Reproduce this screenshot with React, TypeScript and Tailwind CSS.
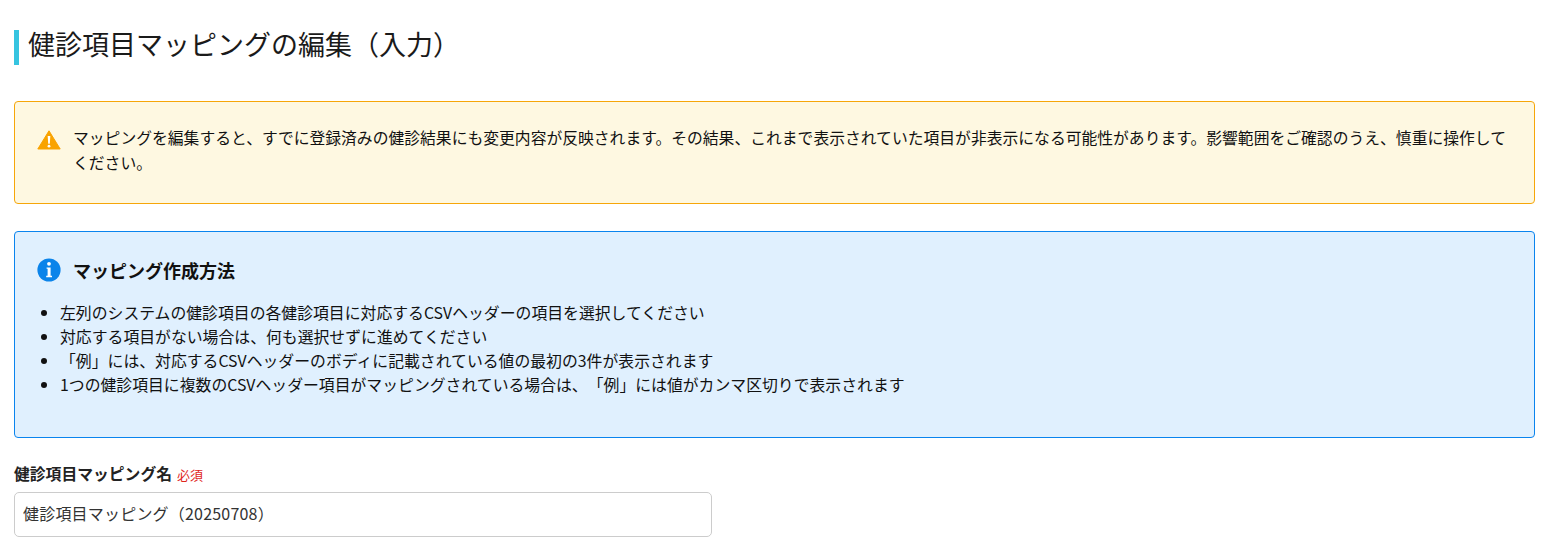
import React from "react";

const FONT = "font-['Noto_Sans_CJK_JP','Noto_Sans',sans-serif]";

const WarningIcon = () => (
  <svg width="24" height="20" viewBox="0 0 24 20" className="shrink-0">
    <path d="M12 0.8 L23.2 19 H0.8 Z" fill="#f9a300" stroke="#f9a300" strokeWidth="1" strokeLinejoin="round" />
    <path d="M10.7 6 H13.3 L12.8 13.8 H11.2 Z" fill="#fff" />
    <circle cx="12" cy="16.2" r="1.4" fill="#fff" />
  </svg>
);

const InfoIcon = () => (
  <svg width="24" height="24" viewBox="0 0 24 24" className="shrink-0">
    <circle cx="12" cy="12" r="11.6" fill="#0b84ea" />
    <circle cx="12" cy="5.8" r="1.9" fill="#fff" />
    <path d="M9.6 9.4 H13.6 V17.8 H15 V19.2 H9.2 V17.8 H10.6 V10.8 H9.6 Z" fill="#fff" />
  </svg>
);

const items = [
  "左列のシステムの健診項目の各健診項目に対応するCSVヘッダーの項目を選択してください",
  "対応する項目がない場合は、何も選択せずに進めてください",
  "「例」には、対応するCSVヘッダーのボディに記載されている値の最初の3件が表示されます",
  "1つの健診項目に複数のCSVヘッダー項目がマッピングされている場合は、「例」には値がカンマ区切りで表示されます",
];

export default function App() {
  return (
    <div className={`${FONT} [text-spacing-trim:space-all] bg-white min-h-[542px] overflow-hidden pl-[14px] pr-[13px] pt-[30px] text-[#111]`}>
      <h1 className="border-l-[5px] border-[#36c4e0] pl-[9px] h-[35px] text-[27px] leading-[28px] font-normal text-[#1a1a1a]">
        健診項目マッピングの編集（入力）
      </h1>

      <div className="mt-[36px] h-[103px] rounded border border-[#f6a609] bg-[#fef8e1] pl-[22px] pr-[24px] pt-[24px] flex gap-[12px]">
        <div className="pt-[4px]">
          <WarningIcon />
        </div>
        <p className="text-[15.8px] leading-[24.5px]">
          マッピングを編集すると、すでに登録済みの健診結果にも変更内容が反映されます。その結果、これまで表示されていた項目が非表示になる可能性があります。影響範囲をご確認のうえ、慎重に操作してください。
        </p>
      </div>

      <div className="mt-[27px] h-[207px] rounded border border-[#0a84ee] bg-[#e0f0fe] pl-[22px] pr-[24px] pt-[26px]">
        <div className="flex items-center gap-[12px] h-[24px]">
          <InfoIcon />
          <div className="text-[18px] font-bold leading-[24px]">マッピング作成方法</div>
        </div>
        <ul className="mt-[19px] list-disc pl-[23px] text-[15.85px] leading-[24px]">
          {items.map((item) => (
            <li key={item}>{item}</li>
          ))}
        </ul>
      </div>

      <div className="mt-[26px] flex items-baseline h-[20px] leading-[20px]">
        <span className="text-[15.8px] font-bold text-[#222]">健診項目マッピング名</span>
        <span className="ml-[5px] text-[13px] text-[#e0261c]">必須</span>
      </div>
      <input
        readOnly
        value="健診項目マッピング（20250708）"
        className="mt-[8px] block w-[698px] h-[45px] rounded-[5px] border border-[#ccc] bg-white px-[8px] pb-[3px] text-[16px] tracking-[0.2px] text-[#333] outline-none"
      />
    </div>
  );
}
